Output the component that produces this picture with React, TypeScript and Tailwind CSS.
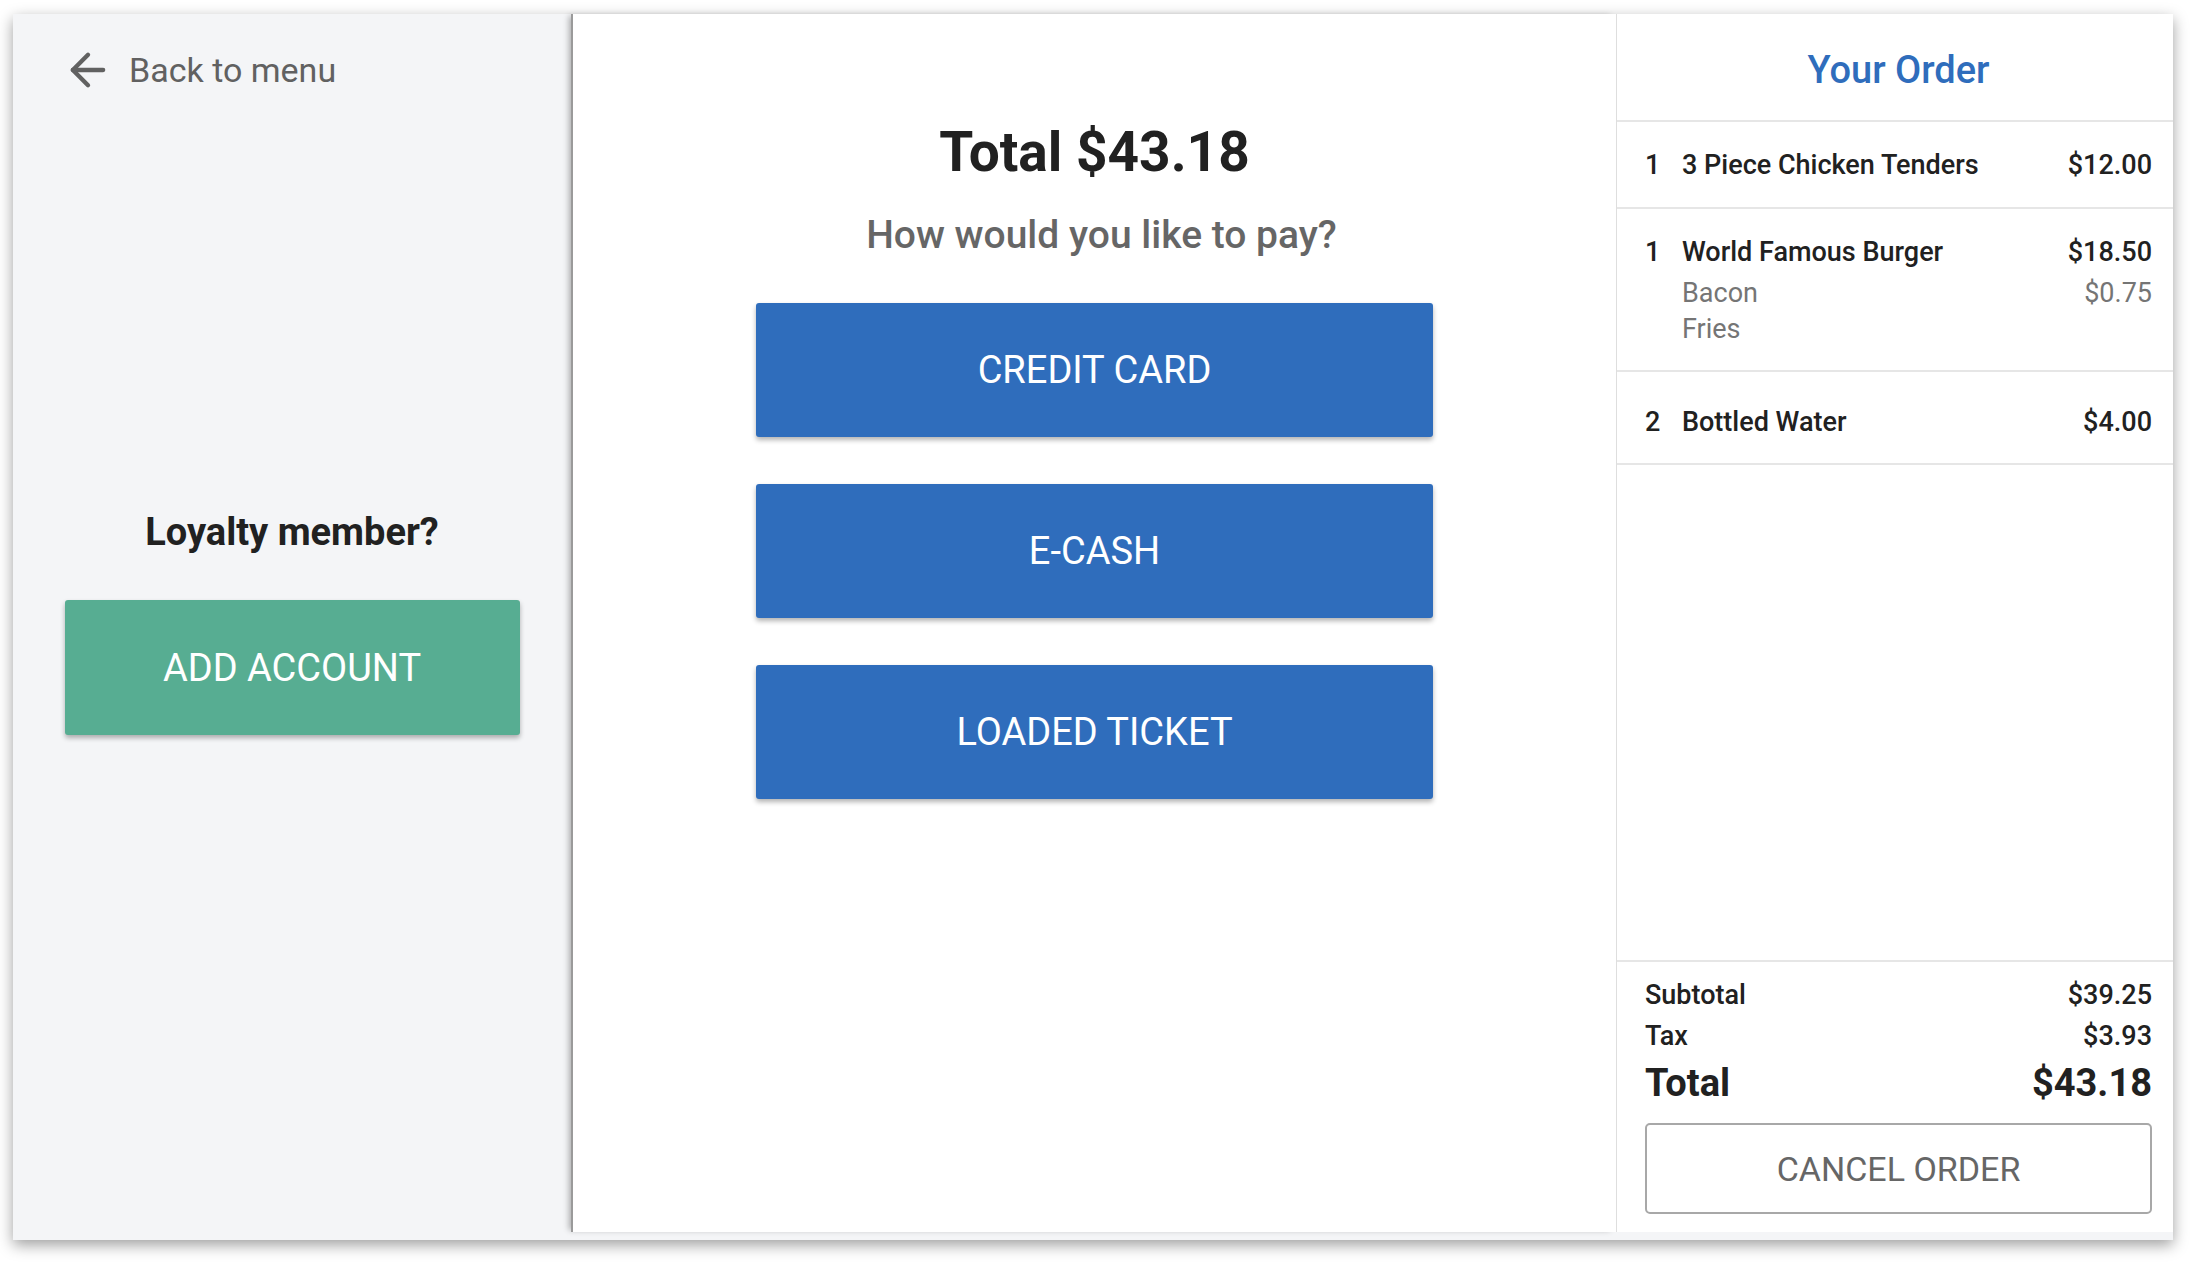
import React from "react";

const font = { fontFamily: "Roboto, 'Noto Sans', Arial, sans-serif" };

function ArrowLeft() {
  return (
    <svg width="52" height="52" viewBox="0 0 24 24" fill="none" stroke="#616161" strokeWidth="2" strokeLinecap="round" strokeLinejoin="round">
      <path d="m12 19-7-7 7-7" />
      <path d="M19 12H5" />
    </svg>
  );
}

function PayButton({ label }: { label: string }) {
  return (
    <button className="w-[677px] h-[134px] bg-[#2f6dbc] text-white text-[38px] leading-none rounded-[3px] shadow-[0_3px_5px_rgba(0,0,0,0.3)] flex items-center justify-center">
      {label}
    </button>
  );
}

export default function App() {
  return (
    <div className="w-[2198px] h-[1272px] bg-white pt-[14px] pl-[13px] text-[#212121]" style={font}>
      <div className="flex w-[2160px] h-[1226px] bg-[#f4f5f7] shadow-[0_5px_14px_rgba(0,0,0,0.38)]">
        {/* Left panel */}
        <div className="w-[558px] h-full flex flex-col">
          <div className="mt-[30px] h-[52px] pl-[49px] flex items-center">
            <ArrowLeft />
            <span className="ml-[15px] text-[34px] leading-[40px] text-[#616161]">Back to menu</span>
          </div>
          <div className="mt-[414px] text-center text-[38px] leading-[44px] font-bold text-[#212121]">
            Loyalty member?
          </div>
          <button className="mt-[46px] mx-auto w-[455px] h-[135px] bg-[#57ad92] text-white text-[38px] leading-none rounded-[3px] shadow-[0_3px_5px_rgba(0,0,0,0.3)] flex items-center justify-center">
            ADD ACCOUNT
          </button>
        </div>

        {/* Middle panel */}
        <div className="w-[1045px] h-[1218px] bg-white border-l-2 border-[#9a9a9a] shadow-[-4px_0_6px_-2px_rgba(0,0,0,0.3)] flex flex-col items-center">
          <div className="mt-[106px] text-[55px] leading-[64px] font-bold text-[#212121]">Total $43.18</div>
          <div className="mt-[27px] ml-[14px] text-[39px] leading-[48px] font-medium text-[#666666]">How would you like to pay?</div>
          <div className="mt-[44px] flex flex-col gap-[47px]">
            <PayButton label="CREDIT CARD" />
            <PayButton label="E-CASH" />
            <PayButton label="LOADED TICKET" />
          </div>
        </div>

        {/* Right panel */}
        <div className="w-[557px] h-[1218px] bg-white border-l border-[#dedede] flex flex-col">
          <div className="h-[108px] pt-[6px] pl-[28px] pr-[21px] border-b-2 border-[#e6e6e6] flex items-center justify-center">
            <span className="text-[38px] leading-[48px] font-medium text-[#2f6dbc]">Your Order</span>
          </div>

          <div className="pt-[25px] pb-[24px] pl-[28px] pr-[21px] border-b-2 border-[#e6e6e6] text-[27px] leading-[36px] font-medium">
            <div className="flex">
              <span className="w-[37px]">1</span>
              <span className="flex-1">3 Piece Chicken Tenders</span>
              <span>$12.00</span>
            </div>
          </div>

          <div className="pt-[25px] pb-[23px] pl-[28px] pr-[21px] border-b-2 border-[#e6e6e6] text-[27px] leading-[36px]">
            <div className="flex font-medium">
              <span className="w-[37px]">1</span>
              <span className="flex-1">World Famous Burger</span>
              <span>$18.50</span>
            </div>
            <div className="mt-[5px] flex text-[#757575]">
              <span className="w-[37px]"></span>
              <span className="flex-1">Bacon</span>
              <span>$0.75</span>
            </div>
            <div className="flex text-[#757575]">
              <span className="w-[37px]"></span>
              <span className="flex-1">Fries</span>
            </div>
          </div>

          <div className="pt-[32px] pb-[23px] pl-[28px] pr-[21px] border-b-2 border-[#e6e6e6] text-[27px] leading-[36px] font-medium">
            <div className="flex">
              <span className="w-[37px]">2</span>
              <span className="flex-1">Bottled Water</span>
              <span>$4.00</span>
            </div>
          </div>

          <div className="flex-1" />

          <div className="border-t-2 border-[#e6e6e6] pt-[15px] pb-[18px] pl-[28px] pr-[21px]">
            <div className="flex justify-between text-[27px] leading-[36px] font-medium">
              <span>Subtotal</span>
              <span>$39.25</span>
            </div>
            <div className="mt-[5px] flex justify-between text-[27px] leading-[36px] font-medium">
              <span>Tax</span>
              <span>$3.93</span>
            </div>
            <div className="mt-[5px] flex justify-between text-[38px] leading-[48px] font-bold">
              <span>Total</span>
              <span>$43.18</span>
            </div>
            <button className="mt-[16px] w-full h-[91px] border-2 border-[#a8a8a8] rounded-[5px] bg-white text-[34px] leading-none text-[#666666] flex items-center justify-center">
              CANCEL ORDER
            </button>
          </div>
        </div>
      </div>
    </div>
  );
}
